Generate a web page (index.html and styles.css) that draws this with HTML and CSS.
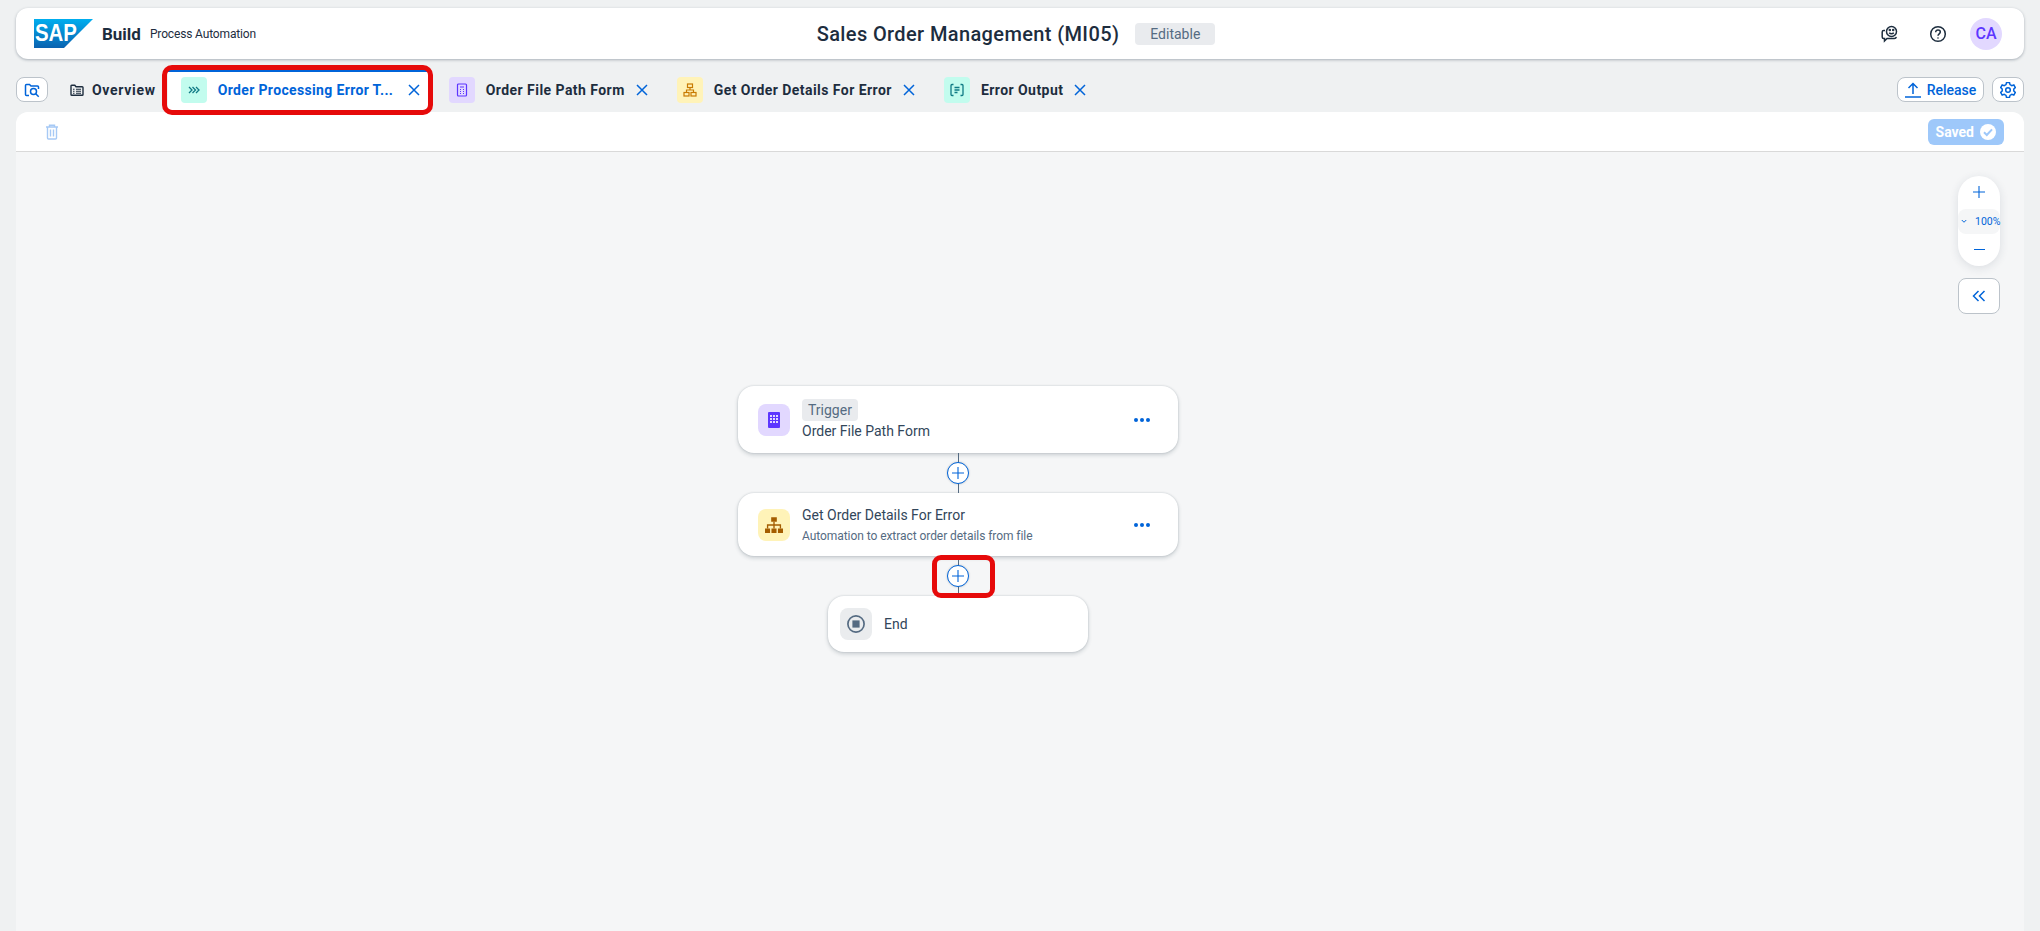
FILE: index.html

```html
<!DOCTYPE html>
<html lang="en">
<head>
    <meta charset="UTF-8">
    <title>SAP Build Process Automation - Sales Order Management</title>
    <link rel="stylesheet" href="styles.css">
</head>
<body>
    <svg class="sprites" width="0" height="0" aria-hidden="true">
        <symbol id="i-x" viewBox="0 0 14 14"><path d="M2 2l10 10M12 2L2 12" fill="none" stroke="currentColor" stroke-width="1.5"/></symbol>
        <symbol id="i-dots" viewBox="0 0 16 4"><circle cx="2" cy="2" r="2"/><circle cx="8" cy="2" r="2"/><circle cx="14" cy="2" r="2"/></symbol>
        <symbol id="i-plus" viewBox="0 0 12 12"><path d="M6 0v12M0 6h12" fill="none" stroke="currentColor" stroke-width="1.1"/></symbol>
    </svg>

    <header class="shell">
        <div class="brand">
            <svg class="logo" viewBox="0 0 59 29">
                <defs>
                    <linearGradient id="sap-blue" x1="0" y1="0" x2="0" y2="1">
                        <stop offset="0" stop-color="#00aeef"/>
                        <stop offset="1" stop-color="#0a62b0"/>
                    </linearGradient>
                </defs>
                <polygon points="0,0 59,0 30,29 0,29" fill="url(#sap-blue)"/>
                <text x="1" y="22" class="logo-text" textLength="42" lengthAdjust="spacingAndGlyphs">SAP</text>
            </svg>
            <span class="brand-name">Build</span>
            <span class="brand-sub">Process Automation</span>
        </div>
        <div class="project">
            <span class="project-title">Sales Order Management (MI05)</span>
            <span class="tag">Editable</span>
        </div>
        <div class="shell-actions">
            <svg class="shell-icon" viewBox="0 0 20 20" fill="none" stroke="currentColor" stroke-width="1.5">
                <path d="M5 6.500H3.700C2.800 6.500 2.200 7.100 2.200 8v5c0 .9.600 1.500 1.500 1.500h.8v2.500L7 14.500h7.300c1.100 0 1.800-.7 2-1.700"/>
                <circle cx="11.500" cy="7.500" r="5"/>
                <path d="M9.200 8.800c1.200 1.400 3.400 1.400 4.600 0"/>
                <circle cx="9.800" cy="6" r=".5" fill="currentColor"/>
                <circle cx="13.200" cy="6" r=".5" fill="currentColor"/>
            </svg>
            <svg class="shell-icon" viewBox="0 0 20 20" fill="none" stroke="currentColor" stroke-width="1.500">
                <circle cx="10" cy="10" r="7.300"/>
                <path d="M7.700 8.200c0-1.400 1-2.300 2.300-2.300s2.300.9 2.300 2.100c0 1.800-2.300 1.800-2.300 3.700"/>
                <circle cx="10" cy="14" r=".8" fill="currentColor" stroke="none"/>
            </svg>
            <span class="avatar">CA</span>
        </div>
    </header>

    <nav class="tabbar">
        <button class="btn btn-icon" type="button">
            <svg class="icon-16" viewBox="0 0 16 16" fill="none" stroke="currentColor" stroke-width="1.500">
                <path d="M5 13.500H2.500c-.6 0-1-.4-1-1v-9c0-.6.4-1 1-1h3l1.500 1.500h6.500c.6 0 1 .4 1 1v2"/>
                <circle cx="9.500" cy="9.500" r="3"/>
                <path d="M11.700 11.700l3 3"/>
            </svg>
        </button>
        <div class="tab tab-plain">
            <svg class="tab-glyph" viewBox="0 0 14 14" fill="none" stroke="currentColor" stroke-width="1.400">
                <path d="M1 3.500V11.500c0 .5.300.8.800.8h10.400c.5 0 .8-.3.800-.8V4.500c0-.5-.3-.8-.8-.8H6L4.800 2.200H1.800c-.5 0-.8.300-.8 1.300z"/>
                <path d="M3 6.300h1.500M3 8.300h1.500M3 10.300h1.500M6 6.300h5M6 8.300h5M6 10.300h5" stroke-width="1.100"/>
            </svg>
            <span class="tab-label">Overview</span>
        </div>
        <div class="tab tab-active">
            <span class="tile tile-teal">
                <svg class="icon-12" viewBox="0 0 12 12" fill="none" stroke="currentColor" stroke-width="1.300">
                    <path d="M1 3l3 3-3 3M4.500 3l3 3-3 3M8 3l3 3-3 3"/>
                </svg>
            </span>
            <span class="tab-label tab-label-cut">Order Processing Error T...</span>
            <svg class="tab-close"><use href="#i-x"/></svg>
        </div>
        <div class="tab">
            <span class="tile tile-purple">
                <svg class="icon-14" viewBox="0 0 14 14" fill="none" stroke="currentColor" stroke-width="1.200">
                    <rect x="2.500" y="1" width="9" height="12" rx="1"/>
                    <path d="M5 4h4M5 6.500h1M8 6.500h1M5 8.500h1M8 8.500h1M5 10.500h1M8 10.500h1"/>
                </svg>
            </span>
            <span class="tab-label">Order File Path Form</span>
            <svg class="tab-close"><use href="#i-x"/></svg>
        </div>
        <div class="tab">
            <span class="tile tile-yellow">
                <svg class="icon-14" viewBox="0 0 14 14" fill="none" stroke="currentColor" stroke-width="1.200">
                    <rect x="4.500" y="1" width="5" height="3.500"/>
                    <rect x="1" y="9.500" width="5" height="3.500"/>
                    <rect x="8" y="9.500" width="5" height="3.500"/>
                    <path d="M7 4.500v2.500M3.500 9.500V7h7v2.500"/>
                </svg>
            </span>
            <span class="tab-label">Get Order Details For Error</span>
            <svg class="tab-close"><use href="#i-x"/></svg>
        </div>
        <div class="tab">
            <span class="tile tile-teal">
                <svg class="icon-14" viewBox="0 0 14 14" fill="none" stroke="currentColor" stroke-width="1.300">
                    <path d="M3.500 1.500H2c-.5 0-1 .5-1 1v9c0 .5.500 1 1 1h1.500M10.500 1.500H12c.5 0 1 .5 1 1v9c0 .5-.5 1-1 1h-1.500"/>
                    <path d="M4.500 4.500h5M4.500 7h5M4.500 9.500h3"/>
                </svg>
            </span>
            <span class="tab-label">Error Output</span>
            <svg class="tab-close"><use href="#i-x"/></svg>
        </div>
        <div class="tabbar-actions">
            <button class="btn btn-release" type="button">
                <svg class="icon-16" viewBox="0 0 16 16" fill="none" stroke="currentColor" stroke-width="1.500">
                    <path d="M8 12V1.500M3.500 6L8 1.500 12.500 6M0 15h16"/>
                </svg>
                Release
            </button>
            <button class="btn btn-icon" type="button">
                <svg class="icon-16" viewBox="0 0 16 16" fill="none" stroke="currentColor" stroke-width="1.500">
                    <path d="M6.500 1h3l.5 2 1.800 1 2-.6 1.500 2.600-1.500 1.400v2l1.500 1.400-1.500 2.600-2-.6-1.800 1-.5 2h-3l-.5-2-1.800-1-2 .6L.7 10.800 2.200 9.400v-2L.7 6l1.500-2.600 2 .6L6 3z" transform="translate(0 -.4)"/>
                    <circle cx="8" cy="8" r="2.300"/>
                </svg>
            </button>
        </div>
    </nav>

    <main class="panel">
        <div class="toolbar">
            <svg class="trash" viewBox="0 0 14 16" fill="none" stroke="currentColor" stroke-width="1.400">
                <path d="M1 3h12M4.500 3V1.200h5V3M2.500 3v11c0 .6.400 1 1 1h7c.6 0 1-.4 1-1V3M5.500 5.500v7M8.500 5.500v7"/>
            </svg>
            <span class="saved">
                Saved
                <svg class="icon-16" viewBox="0 0 16 16">
                    <circle cx="8" cy="8" r="8" fill="#fff"/>
                    <path d="M4 8.300l2.800 2.700L12 5.300" fill="none" stroke="#9ec8fa" stroke-width="2"/>
                </svg>
            </span>
        </div>

        <section class="canvas">
            <div class="flow">
                <div class="node">
                    <span class="node-tile tile-purple">
                        <svg class="icon-18" viewBox="0 0 18 18">
                            <rect x="3" y="1" width="12" height="16" rx="1" fill="#5d36ff"/>
                            <path fill="#e2d8ff" d="M5 4h2v2H5zM8 4h2v2H8zM11 4h2v2h-2zM5 7h2v2H5zM8 7h2v2H8zM11 7h2v2h-2zM5 10h2v2H5zM8 10h2v2H8zM11 10h2v2h-2z"/>
                        </svg>
                    </span>
                    <div class="node-text">
                        <span class="tag tag-small">Trigger</span>
                        <span class="node-name">Order File Path Form</span>
                    </div>
                    <svg class="node-more"><use href="#i-dots"/></svg>
                </div>

                <div class="link">
                    <span class="add"><svg class="icon-12"><use href="#i-plus"/></svg></span>
                </div>

                <div class="node node-short">
                    <span class="node-tile tile-yellow">
                        <svg class="icon-18" viewBox="0 0 16 16" fill="currentColor">
                            <path d="M5.500 1h5v4h-5zM0 11h4.500v4H0zM5.750 11h4.500v4h-4.500zM11.500 11H16v4h-4.500z"/>
                            <path d="M7.400 5h1.200v2.400h5.700V11h-1.200V8.600H8.600V11H7.400V8.600H2.900V11H1.700V7.400h5.700z"/>
                        </svg>
                    </span>
                    <div class="node-text">
                        <span class="node-name node-name-top">Get Order Details For Error</span>
                        <span class="node-desc">Automation to extract order details from file</span>
                    </div>
                    <svg class="node-more"><use href="#i-dots"/></svg>
                </div>

                <div class="link link-marked">
                    <span class="add"><svg class="icon-12"><use href="#i-plus"/></svg></span>
                </div>

                <div class="node node-end">
                    <span class="node-tile tile-grey">
                        <svg class="icon-18" viewBox="0 0 16 16">
                            <circle cx="8" cy="8" r="7.200" fill="none" stroke="currentColor" stroke-width="1.500"/>
                            <rect x="4.800" y="4.800" width="6.400" height="6.400" fill="currentColor"/>
                        </svg>
                    </span>
                    <span class="node-name">End</span>
                </div>
            </div>

            <div class="zoom-tools">
                <div class="zoom">
                    <span class="zoom-step"><svg class="icon-12"><use href="#i-plus"/></svg></span>
                    <div class="zoom-level">
                        <svg class="zoom-caret" viewBox="0 0 8 6"><path d="M1 1l3 3 3-3" fill="none" stroke="currentColor" stroke-width="1.300"/></svg>
                        <span class="zoom-value">100%</span>
                    </div>
                    <span class="zoom-step"><span class="zoom-minus"></span></span>
                </div>
                <button class="btn btn-collapse" type="button">
                    <svg class="icon-14" viewBox="0 0 14 14" fill="none" stroke="currentColor" stroke-width="1.500">
                        <path d="M6.500 2L1.500 7l5 5M12.500 2l-5 5 5 5"/>
                    </svg>
                </button>
            </div>
        </section>
    </main>
</body>
</html>
```

FILE: styles.css

```css
* {
    box-sizing: border-box;
}

html,
body {
    height: 100%;
}

body {
    margin: 0;
    display: flex;
    flex-direction: column;
    overflow: hidden;
    background: #eff1f2;
    color: #1d2d3e;
    font-family: Roboto, "Liberation Sans", sans-serif;
    font-size: 14px;
}

.sprites {
    position: absolute;
}

svg {
    display: block;
    flex: none;
}

.icon-12 { width: 12px; height: 12px; }
.icon-14 { width: 14px; height: 14px; }
.icon-16 { width: 16px; height: 16px; }
.icon-18 { width: 18px; height: 18px; }

/* top bar */
.shell {
    display: grid;
    grid-template-columns: 1fr auto 1fr;
    align-items: center;
    height: 51px;
    margin: 8px 16px 0;
    padding: 0 22px 0 18px;
    background: #fff;
    border-radius: 12px;
    box-shadow: 0 1px 3px rgba(34, 53, 72, 0.35);
}

.brand {
    display: flex;
    align-items: center;
}

.logo {
    width: 59px;
    height: 29px;
}

.logo-text {
    fill: #fff;
    font-family: "Liberation Sans", sans-serif;
    font-size: 24px;
    font-weight: bold;
}

.brand-name {
    margin-left: 9px;
    font-size: 17px;
    font-weight: 700;
}

.brand-sub {
    margin-left: 9px;
    font-size: 12px;
    letter-spacing: -0.15px;
}

.project {
    display: flex;
    align-items: center;
    gap: 16px;
    margin-right: 4px;
}

.project-title {
    font-size: 20px;
    font-weight: 500;
    letter-spacing: 0.38px;
}

.tag {
    display: inline-block;
    padding: 0 15px;
    height: 22px;
    line-height: 22px;
    background: #e9ebee;
    border-radius: 4px;
    color: #556b82;
    font-size: 14px;
}

.shell-actions {
    display: flex;
    align-items: center;
    justify-content: flex-end;
    gap: 28px;
    color: #1d2d3e;
}

.shell-icon {
    width: 20px;
    height: 20px;
}

.avatar {
    display: flex;
    align-items: center;
    justify-content: center;
    width: 32px;
    height: 32px;
    margin-left: -6px;
    border-radius: 50%;
    background: #e2d8ff;
    color: #5d36ff;
    font-size: 16px;
    font-weight: 500;
}

/* tab row */
.tabbar {
    display: flex;
    align-items: flex-end;
    gap: 8px;
    height: 53px;
    padding: 0 16px;
}

.btn {
    display: flex;
    align-items: center;
    justify-content: center;
    background: #fff;
    border: 1px solid #bcc3ca;
    border-radius: 8px;
    color: #0064d9;
    font-family: inherit;
    cursor: pointer;
}

.btn-icon {
    width: 32px;
    height: 25px;
    margin-bottom: 10px;
    padding: 0;
}

.tab {
    display: flex;
    align-items: center;
    height: 42px;
    padding: 2px 7px 4px 13px;
}

.tab-plain {
    margin-left: 1px;
    padding-right: 4px;
}

.tab-plain .tab-label {
    letter-spacing: 0.7px;
}

.tab-glyph {
    width: 14px;
    height: 14px;
    margin-right: 8px;
}

.tab-active {
    position: relative;
    background: #fff;
    border-top: 2px solid #0064d9;
    padding-top: 0;
    color: #0064d9;
}

.tab-active::after {
    content: "";
    position: absolute;
    top: -7px;
    left: -6px;
    right: -5px;
    bottom: -3px;
    border: 5px solid #e60a0a;
    border-radius: 10px;
}

.tab-label {
    font-size: 14px;
    font-weight: 700;
    letter-spacing: 0.45px;
    white-space: nowrap;
}

.tab-label-cut {
    width: 179px;
    letter-spacing: 0.35px;
}

.tile {
    display: flex;
    align-items: center;
    justify-content: center;
    width: 26px;
    height: 26px;
    margin-right: 11px;
    border-radius: 4px;
}

.tile-teal { background: #c2fcee; color: #0f7a85; }
.tile-purple { background: #e2d8ff; color: #5d36ff; }
.tile-yellow { background: #fff3b8; color: #c87b00; }
.tile-grey { background: #eaecee; color: #556b82; }

.tab-close {
    width: 14px;
    height: 14px;
    margin-left: 10px;
    color: #0064d9;
}

.tabbar-actions {
    display: flex;
    gap: 8px;
    margin-left: auto;
}

.btn-release {
    gap: 6px;
    width: 87px;
    height: 25px;
    margin-bottom: 10px;
    padding: 0;
    font-size: 14px;
    font-weight: 500;
}

/* main panel */
.panel {
    flex: 1;
    display: flex;
    flex-direction: column;
    margin: 0 16px;
    border-radius: 12px 12px 0 0;
    background: #f5f6f7;
    overflow: hidden;
}

.toolbar {
    display: flex;
    align-items: center;
    justify-content: space-between;
    height: 40px;
    padding: 0 20px 0 29px;
    background: #fff;
    border-bottom: 1px solid #d9d9d9;
}

.trash {
    width: 14px;
    height: 16px;
    color: #a6c9f5;
}

.saved {
    display: flex;
    align-items: center;
    gap: 6px;
    height: 26px;
    padding: 0 8px;
    background: #9ec8fa;
    border-radius: 6px;
    color: #fff;
    font-weight: 700;
}

/* process canvas */
.canvas {
    position: relative;
    flex: 1;
}

.flow {
    position: absolute;
    top: 234px;
    left: 722px;
    display: flex;
    flex-direction: column;
    align-items: center;
    width: 440px;
}

.node {
    display: flex;
    align-items: center;
    width: 440px;
    height: 67px;
    padding: 0 28px 0 20px;
    background: #fff;
    border-radius: 16px;
    box-shadow: 0 0 2px rgba(34, 53, 72, 0.2), 0 2px 4px rgba(34, 53, 72, 0.2);
}

.node-short {
    height: 63px;
}

.node-end {
    width: 260px;
    height: 56px;
    padding: 0 12px;
}

.node-tile {
    display: flex;
    align-items: center;
    justify-content: center;
    width: 32px;
    height: 32px;
    margin-right: 12px;
    border-radius: 8px;
}

.node .tile-yellow {
    color: #a45d00;
}

.node-text {
    display: flex;
    flex-direction: column;
    align-items: flex-start;
    flex: 1;
}

.node-name {
    color: #32465a;
    font-size: 14px;
    line-height: 20px;
}

.node-name-top {
    margin-bottom: 3px;
}

.node-desc {
    color: #556b82;
    font-size: 12px;
    line-height: 16px;
    letter-spacing: -0.06px;
}

.tag-small {
    height: 22px;
    padding: 0 6px;
    font-size: 14px;
}

.node-more {
    width: 16px;
    height: 4px;
    fill: #0064d9;
}

.link {
    position: relative;
    display: flex;
    align-items: center;
    justify-content: center;
    width: 100%;
    height: 40px;
}

.link::before {
    content: "";
    position: absolute;
    top: 0;
    bottom: 0;
    left: 50%;
    width: 1px;
    background: #556b82;
}

.link-marked::after {
    content: "";
    position: absolute;
    top: -1px;
    bottom: -2px;
    left: 50%;
    width: 53px;
    margin-left: -26px;
    border: 5px solid #e60a0a;
    border-radius: 9px;
}

.add {
    position: relative;
    display: flex;
    align-items: center;
    justify-content: center;
    width: 22px;
    height: 22px;
    background: #fff;
    border: 1px solid #0064d9;
    border-radius: 50%;
    color: #0064d9;
    box-shadow: 0 0 2px rgba(34, 53, 72, 0.3);
}

/* zoom controls */
.zoom-tools {
    position: absolute;
    top: 24px;
    right: 24px;
    display: flex;
    flex-direction: column;
    gap: 12px;
    width: 42px;
}

.zoom {
    display: flex;
    flex-direction: column;
    height: 90px;
    background: #fff;
    border-radius: 21px;
    box-shadow: 0 2px 10px rgba(34, 53, 72, 0.12);
    color: #0064d9;
}

.zoom-step {
    display: flex;
    flex: 1;
    align-items: center;
    justify-content: center;
}

.zoom-level {
    display: flex;
    align-items: center;
    height: 25px;
    padding-left: 3px;
    background: #f5f6f7;
    border-radius: 8px;
}

.zoom-caret {
    width: 6px;
    height: 5px;
    margin-right: 8px;
}

.zoom-value {
    font-size: 10.500px;
    white-space: nowrap;
}

.zoom-minus {
    width: 11px;
    height: 1px;
    background: #0064d9;
}

.btn-collapse {
    width: 42px;
    height: 36px;
    padding: 0;
}
```
